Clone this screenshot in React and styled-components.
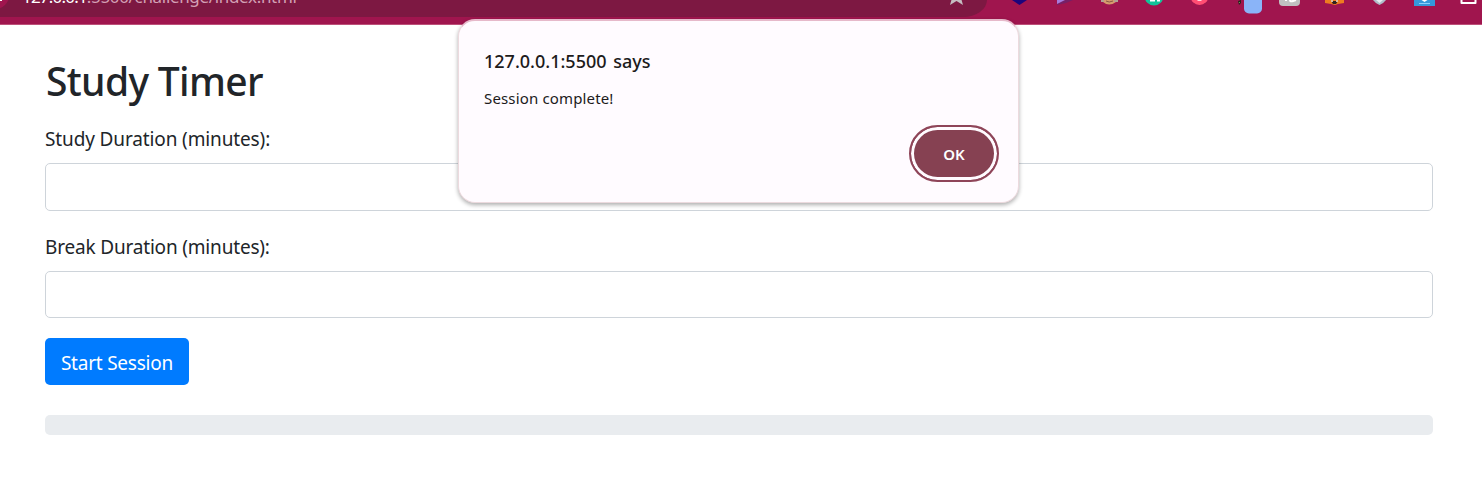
import React from "react";
import styled, { createGlobalStyle } from "styled-components";

const Global = createGlobalStyle`
  * { box-sizing: border-box; }
  body { margin: 0; background: #fff; color: #212529; overflow: hidden; font-family: "Noto Sans", "Open Sans", sans-serif; }
`;

const Page = styled.div`
  position: relative;
  height: 492px;
  overflow: hidden;
`;
const BrowserBar = styled.header`
  display: flex;
  height: 25px;
  background: #a0154e;
  border-bottom: 1px solid #bd5079;
  overflow: hidden;
`;
const AddressBar = styled.div`
  display: flex;
  align-items: flex-start;
  width: 987px;
  height: 17px;
  background: #7d1842;
  border-bottom-right-radius: 24px 17px;
`;
const SiteInfo = styled.svg`
  display: block;
  flex: none;
  width: 24px;
  height: 17px;
`;
const Url = styled.div`
  flex: 1;
  margin-top: -15px;
  margin-left: -2px;
  color: #d3a0b5;
  font-size: 17px;
  line-height: 24px;
  letter-spacing: ${(p) => p.$spacing}px;
  white-space: nowrap;
`;
const Host = styled.span`
  color: #fff;
  letter-spacing: -0.8px;
`;
const Star = styled.svg`
  flex: none;
  width: 40px;
  height: 17px;
`;
const Extensions = styled.svg`
  flex: none;
  width: 495px;
  height: 24px;
`;

const Main = styled.main`
  display: flex;
  flex-direction: column;
  align-items: stretch;
  padding: 32px 49px 0 45px;
`;
const Title = styled.h1`
  margin: 0 0 19px;
  padding-left: 1px;
  height: 48px;
  font-size: 39px;
  line-height: 48px;
  font-weight: 500;
  letter-spacing: ${(p) => p.$spacing}px;
`;
const Field = styled.div`
  display: flex;
  flex-direction: column;
  margin-bottom: ${(p) => p.$after}px;
  gap: 8px;
`;
const Label = styled.label`
  height: 31px;
  font-size: 19px;
  line-height: 31px;
  letter-spacing: ${(p) => p.$spacing}px;
`;
const Input = styled.input`
  width: 100%;
  height: ${(p) => p.$height}px;
  border: 1px solid #ced4da;
  border-radius: 5px;
  background: #fff;
  outline: none;
`;
const StartButton = styled.button`
  align-self: flex-start;
  width: 144px;
  height: 47px;
  padding: 3px 0 0;
  border: 0;
  border-radius: 5px;
  background: #007bff;
  color: #fff;
  font: 400 19px "Noto Sans", sans-serif;
  letter-spacing: ${(p) => p.$spacing}px;
  white-space: nowrap;
`;
const Progress = styled.div`
  height: 20px;
  margin-top: 30px;
  border-radius: 5px;
  background: #e9ecef;
`;

const Dialog = styled.section`
  position: absolute;
  top: 19px;
  left: 458px;
  display: flex;
  flex-direction: column;
  width: 561px;
  height: 184px;
  padding: 27px 19px 0 25px;
  border: 1px solid #ecdade;
  border-top: 2px solid #e6b9ca;
  border-radius: 17px;
  background: #fffbff;
  box-shadow: 0 2px 4px rgba(0, 0, 0, 0.32);
  color: #201a1b;
`;
const DialogTitle = styled.h2`
  margin: 0;
  font-size: 18px;
  line-height: 26px;
  font-weight: 500;
  word-spacing: 2px;
`;
const Message = styled.p`
  margin: 13px 0 0;
  font-size: 15px;
  line-height: 22px;
  letter-spacing: ${(p) => p.$spacing}px;
`;
const OkButton = styled.button`
  align-self: flex-end;
  flex: none;
  width: 90px;
  height: 57px;
  margin-top: 16px;
  padding: 0;
  border: 2px solid #8f4559;
  border-radius: 29px;
  background: #864152;
  box-shadow: inset 0 0 0 3px #fffbff;
  color: #fff;
  font: 600 15px "Noto Sans", sans-serif;
`;

export default function App() {
  return (
    <Page>
      <Global />
      <BrowserBar>
        <AddressBar>
          <SiteInfo viewBox="0 0 24 17">
            <circle cx="-6" cy="-6" r="15.5" fill="#a0154e" />
            <path d="M0 0h2" stroke="#fff" strokeWidth="2" />
          </SiteInfo>
          <Url $spacing={-0.33}><Host>127.0.0.1</Host>:5500/challenge/index.html</Url>
          <Star viewBox="0 0 40 17">
            <path d="M3 5 L5 -2 H14 L16 5 L9.5 1 Z" fill="#c5bdc1" />
          </Star>
        </AddressBar>
        <Extensions viewBox="0 0 495 24">
          <path d="M25 0h15l-7.500 5z" fill="#1c047c" />
          <path d="M70 0h16l-7 3-9 2z" fill="#762066" />
          <path d="M70 0h8l-8 4z" fill="#a77bdc" />
          <path d="M114 0h17v2h-2q-7 5-13 0h-2z" fill="#d79a6d" />
          <path d="M114 0h3v2h-3zm13 0h4v2h-4z" fill="#b0a293" />
          <path d="M119 1q3 2 7 0" fill="none" stroke="#865846" />
          <circle cx="167" cy="-4" r="9.500" fill="#12c39a" />
          <path d="M163 .5h5m2 0h3" stroke="#fff" strokeWidth="2" />
          <circle cx="212.500" cy="-4" r="9" fill="#ff4e73" />
          <path d="M210.500 0h4" stroke="#ffd2dd" strokeWidth="2" />
          <path d="M251 1l3-1v3l-2 2z" fill="#28261f" />
          <path d="M252 2h1v1h-1z" fill="#669c55" />
          <rect x="257" y="-8" width="18" height="21.500" rx="5" fill="#8ab4f8" />
          <rect x="292" y="-10" width="21" height="16" rx="4" fill="#c0c0c0" />
          <path d="M299 0v1m4-1q0 2 3 1t3-1" fill="none" stroke="#fff" strokeWidth="2" />
          <path d="M338 0h19v3l-6 1-3 1-4-1-6-1z" fill="#ee7c20" />
          <path d="M344 1h7l-2 3h-3z" fill="#30231d" />
          <path d="M344 0h2v2h-2zm5 0h2v2h-2z" fill="#d8bda5" />
          <path d="M386 0h13q-2 3-6.500 5-4.500-2-6.500-5z" fill="#aebdc9" />
          <path d="M389 0h7l-3.500 3z" fill="#e7edf1" />
          <path d="M427 0h21v6h-21z" fill="#3498db" />
          <path d="M432 3.500h11M437.500 0v1" stroke="#8bd2ff" />
          <path d="M434.500 0h6l-3 2z" fill="#fff" />
          <path d="M474.500-4V3h14V-4" fill="none" stroke="#fff" strokeWidth="2" strokeLinejoin="round" />
        </Extensions>
      </BrowserBar>
      <Main>
        <Title $spacing={-0.65}>Study Timer</Title>
        <Field $after={21}>
          <Label $spacing={-0.13} htmlFor="study">Study Duration (minutes):</Label>
          <Input $height={48} id="study" />
        </Field>
        <Field $after={20}>
          <Label $spacing={-0.18} htmlFor="break">Break Duration (minutes):</Label>
          <Input $height={47} id="break" />
        </Field>
        <StartButton $spacing={-0.22}>Start Session</StartButton>
        <Progress />
      </Main>
      <Dialog role="dialog">
        <DialogTitle>127.0.0.1:5500 says</DialogTitle>
        <Message $spacing={0.15}>Session complete!</Message>
        <OkButton>OK</OkButton>
      </Dialog>
    </Page>
  );
}
